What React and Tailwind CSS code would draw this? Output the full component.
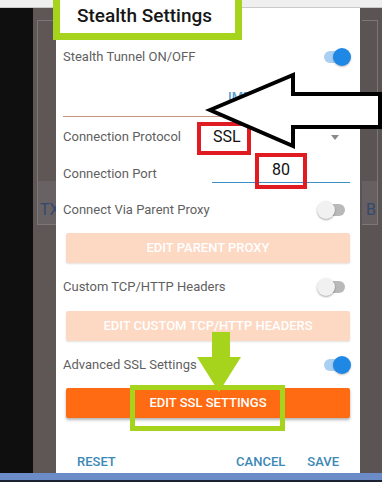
import React from 'react';

function Toggle({ on }) {
  return (
    <div className="relative w-[34px] h-[18px] shrink-0">
      <div
        className={`absolute left-[7px] top-[3px] w-[21px] h-[12px] rounded-full ${
          on ? 'bg-[#a9cff3]' : 'bg-[#b9b9b9]'
        }`}
      />
      {on ? (
        <div className="absolute right-0 top-0 w-[18px] h-[18px] rounded-full bg-[#1f88e5] shadow-[0_1px_2px_rgba(0,0,0,0.25)]" />
      ) : (
        <div className="absolute left-0 top-0 w-[18px] h-[18px] rounded-full bg-[#f1f1f1] shadow-[0_1px_2px_rgba(0,0,0,0.35)]" />
      )}
    </div>
  );
}

function Row({ label, h, children }) {
  return (
    <div className={`flex items-center justify-between ${h}`}>
      <span>{label}</span>
      {children}
    </div>
  );
}

export default function App() {
  return (
    <div
      className="relative w-[382px] h-[482px] overflow-hidden bg-[#0f0f0f]"
      style={{ fontFamily: 'Roboto, "Liberation Sans", sans-serif' }}
    >
      {/* top strip */}
      <div className="h-[8px] bg-[#efefef] border-b border-[#c9c9c9]" />

      <div className="flex h-[465px]">
        <div className="w-[33px] bg-[#0f0f0f]" />

        {/* dimmed screen, left */}
        <div className="w-[23px] bg-[#5e5756] overflow-hidden">
          <div className="ml-[4px] mt-[12px] h-[205px] w-[40px] border-l border-t border-b border-[#7d7777] flex flex-col justify-end">
            <div className="h-[43px] bg-[#686264] flex items-end pb-[2px] pl-[2px] text-[16px] leading-[24px] text-[#34496b]">TX</div>
          </div>
        </div>

        {/* dialog */}
        <div className="w-[304px] bg-white flex flex-col pl-[7px] pr-[9px] text-[13px] text-[#5f5f5f]">
          <div className="h-[34px] pl-[14px]">
            <div className="relative z-20 leading-[16px] text-[19px] font-medium text-[#161616]">
              Stealth Settings
            </div>
          </div>

          <Row label="Stealth Tunnel ON/OFF" h="h-[30px]">
            <Toggle on />
          </Row>

          <div className="h-[45px] border-b-[1.5px] border-[#c79484] flex items-center pt-[5px] pl-[165px] font-medium text-[#5aa0d2]">
            IMPORT
          </div>

          <div className="h-[40px] flex items-center">
            <span className="w-[150px]">Connection Protocol</span>
            <span className="flex-1 text-[16px] text-[#111]">SSL</span>
            <div className="mr-[12px] w-0 h-0 border-l-[4px] border-r-[4px] border-t-[5px] border-l-transparent border-r-transparent border-t-[#8a8a8a]" />
          </div>

          <div className="h-[30px] flex items-start justify-between">
            <span className="mt-[7px]">Connection Port</span>
            <div className="mt-[3px] mr-[1px] w-[138px] h-[23px] border-b-[1.5px] border-[#3a8fc7] pl-[60px] text-[16px] leading-[20px] text-[#111]">
              80
            </div>
          </div>

          <Row label="Connect Via Parent Proxy" h="h-[46px]">
            <Toggle />
          </Row>

          <button className="ml-[3px] mr-[1px] h-[30px] rounded-[2px] bg-[#fdd8c3] text-white text-[13px] font-medium shadow-[0_1px_2px_rgba(0,0,0,0.12)]">
            EDIT PARENT PROXY
          </button>

          <Row label="Custom TCP/HTTP Headers" h="h-[48px]">
            <Toggle />
          </Row>

          <button className="ml-[3px] mr-[1px] h-[30px] rounded-[2px] bg-[#fdd8c3] text-white text-[13px] font-medium shadow-[0_1px_2px_rgba(0,0,0,0.12)]">
            EDIT CUSTOM TCP/HTTP HEADERS
          </button>

          <Row label="Advanced SSL Settings" h="h-[47px]">
            <Toggle on />
          </Row>

          <button className="ml-[3px] mr-[1px] h-[30px] rounded-[2px] bg-[#ff6b12] text-white text-[13px] font-medium shadow-[0_2px_3px_rgba(0,0,0,0.3)]">
            EDIT SSL SETTINGS
          </button>

          <div className="flex-1 flex items-end pb-[3px] pl-[14px] pr-[12px] text-[13px] font-medium leading-[16px] text-[#3c88b5]">
            <span>RESET</span>
            <span className="ml-auto">CANCEL</span>
            <span className="ml-[22px]">SAVE</span>
          </div>
        </div>

        {/* dimmed screen, right */}
        <div className="w-[22px] bg-[#5a5454] overflow-hidden">
          <div className="ml-[2px] mt-[12px] h-[205px] w-[16px] border-r border-t border-b border-[#7d7777] flex flex-col justify-end">
            <div className="h-[43px] bg-[#666062] flex items-end pb-[2px] pl-[4px] text-[16px] leading-[24px] text-[#34496b]">B</div>
          </div>
        </div>
      </div>

      <div className="h-[7px] bg-[#6b8cc6]" />
      <div className="h-[2px] bg-[#1b2233]" />

      {/* annotations */}
      <div className="absolute left-[53px] top-0 w-[189px] h-[40px] border-[7px] border-t-0 border-[#a6d41d] bg-white z-10" />

      <div className="absolute left-[197px] top-[122px] w-[54px] h-[33px] border-4 border-[#e11b22]" />
      <div className="absolute left-[255px] top-[153px] w-[52px] h-[36px] border-4 border-[#e11b22]" />

      <svg className="absolute left-[204px] top-[70px]" width="178" height="82" viewBox="0 0 178 82">
        <polygon
          points="6,40 89,5 89,24 176,24 176,57 89,57 89,76"
          fill="#ffffff"
          stroke="#000000"
          strokeWidth="4"
          strokeLinejoin="miter"
        />
      </svg>

      <svg className="absolute left-[195px] top-[330px]" width="50" height="66" viewBox="0 0 50 66">
        <polygon points="17,2 35,2 35,27 46,27 24,62 2,27 17,27" fill="#a6d41d" />
      </svg>

      <div className="absolute left-[130px] top-[385px] w-[155px] h-[46px] border-[5px] border-[#a6d41d]" />
    </div>
  );
}
